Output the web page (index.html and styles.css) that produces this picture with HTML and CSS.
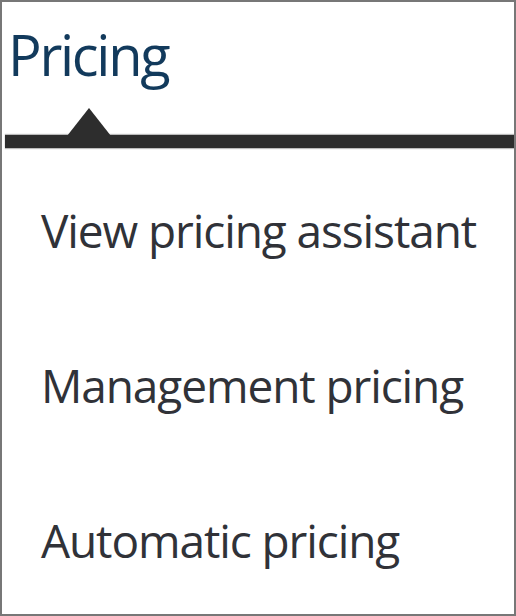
FILE: index.html
```html
<!DOCTYPE html>
<html>
<head>
<meta charset="utf-8">
<link rel="stylesheet" href="styles.css">
</head>
<body>
<div class="frame">
  <div class="title">Pricing</div>
  <div class="tabbar">
    <svg class="notch" width="44" height="28" viewBox="0 0 44 28"><polygon points="0,28 22,0 44,28" fill="#2d2d2d"/></svg>
  </div>
  <ul class="menu">
    <li>View pricing assistant</li>
    <li>Management pricing</li>
    <li>Automatic pricing</li>
  </ul>
</div>
</body>
</html>
```
FILE: styles.css
```css
html, body { margin: 0; padding: 0; background: #fff; }
.frame {
  width: 516px;
  height: 616px;
  box-sizing: border-box;
  border: 2px solid #777;
  font-family: "Open Sans", "Noto Sans", sans-serif;
  overflow: hidden;
}
.title {
  color: #123a5c;
  font-size: 56px;
  line-height: 70px;
  padding: 17px 0 0 6px;
  letter-spacing: -2.3px;
}
.tabbar {
  position: relative;
  margin: 46px 0 0 3px;
  height: 13px;
  background: #2d2d2d;
  box-shadow: 0 1px 1px #bbb, 0 -1px 1px #bbb;
}
.notch {
  position: absolute;
  left: 62px;
  bottom: 12px;
  display: block;
}
.menu {
  list-style: none;
  margin: 0;
  padding: 0 0 0 39px;
}
.menu li {
  color: #303238;
  font-size: 46px;
  line-height: 155px;
  letter-spacing: -1.1px;
}
.menu li:first-child { margin-top: 5px; }
```
